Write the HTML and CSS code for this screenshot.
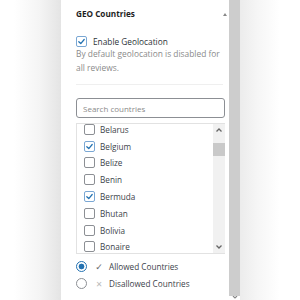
FILE: index.html
```html
<!DOCTYPE html>
<html>
<head>
<meta charset="utf-8">
<link rel="stylesheet" href="styles.css">
</head>
<body>
<div class="screen">
  <div class="left-shade"></div>
  <div class="panel">
    <div class="panel-head">
      <span class="title">GEO Countries</span>
      <span class="toggle"></span>
    </div>
    <label class="check-row">
      <span class="cb checked"><svg viewBox="0 0 10 10"><path d="M2 5.2 L4.2 7.3 L8 2.8" /></svg></span>
      <span class="check-label">Enable Geolocation</span>
    </label>
    <p class="desc">By default geolocation is disabled for all reviews.</p>
    <div class="sep"></div>
    <div class="search">Search countries</div>
    <div class="listbox">
      <div class="items">
        <div class="item"><span class="cb"></span>Belarus</div>
        <div class="item"><span class="cb checked"><svg viewBox="0 0 10 10"><path d="M2 5.2 L4.2 7.3 L8 2.8" /></svg></span>Belgium</div>
        <div class="item"><span class="cb"></span>Belize</div>
        <div class="item"><span class="cb"></span>Benin</div>
        <div class="item"><span class="cb checked"><svg viewBox="0 0 10 10"><path d="M2 5.2 L4.2 7.3 L8 2.8" /></svg></span>Bermuda</div>
        <div class="item"><span class="cb"></span>Bhutan</div>
        <div class="item"><span class="cb"></span>Bolivia</div>
        <div class="item"><span class="cb"></span>Bonaire</div>
      </div>
      <div class="vscroll">
        <span class="arrow"><svg viewBox="0 0 8 8"><path d="M1.5 5.5 L4 3 L6.5 5.5" /></svg></span>
        <span class="track"><span class="thumb"></span></span>
        <span class="arrow"><svg viewBox="0 0 8 8"><path d="M1.5 2.5 L4 5 L6.5 2.5" /></svg></span>
      </div>
    </div>
    <div class="radios">
      <div class="radio-row">
        <span class="radio on"></span>
        <span class="mark tick">✓</span>
        <span>Allowed Countries</span>
      </div>
      <div class="radio-row">
        <span class="radio"></span>
        <span class="mark cross">✕</span>
        <span>Disallowed Countries</span>
      </div>
    </div>
  </div>
  <div class="outer-scroll">
    <span class="outer-track"></span>
    <span class="outer-arrow"><svg viewBox="0 0 8 8"><path d="M2 3 L4 5 L6 3" /></svg></span>
  </div>
  <div class="right-shade"></div>
</div>
</body>
</html>
```
FILE: styles.css
```css
* { box-sizing: border-box; }
html, body { margin: 0; padding: 0; }
body {
  font-family: "Open Sans", "DejaVu Sans", sans-serif;
  color: #2c3338;
  background: #fff;
}
.screen {
  display: flex;
  width: 300px;
  height: 300px;
  overflow: hidden;
}
.left-shade {
  width: 61px;
  flex: none;
  background: linear-gradient(to right, #ffffff 0px, #ffffff 14px, #f4f4f4 40px, #e4e4e4 61px);
}
.panel {
  width: 168px;
  flex: none;
  height: 296px;
  background: #fff;
  padding: 0 4px 0 15px;
  display: flex;
  flex-direction: column;
}
.panel-head {
  height: 27px;
  display: flex;
  align-items: center;
  justify-content: space-between;
}
.title {
  font-weight: 700;
  font-size: 8.2px;
  color: #1e1e1e;
}
.toggle {
  width: 0;
  height: 0;
  border-left: 2.5px solid transparent;
  border-right: 2.5px solid transparent;
  border-bottom: 3.5px solid #888;
  margin-right: -2px;
  margin-top: 1px;
}
.check-row {
  display: flex;
  align-items: center;
  gap: 6px;
  height: 14px;
  margin-top: 7px;
  color: #2c3338;
}
.check-label { font-size: 8.3px; }
.cb {
  width: 11px;
  height: 11px;
  flex: none;
  border: 1px solid #8c8f94;
  border-radius: 2px;
  background: #fff;
  display: inline-flex;
  align-items: center;
  justify-content: center;
}
.cb.checked { border-color: #7aa7d4; }
.cb svg { width: 9px; height: 9px; }
.cb svg path { fill: none; stroke: #2271b1; stroke-width: 1.4; stroke-linecap: round; stroke-linejoin: round; }
.desc {
  margin: -1px 0 0;
  font-size: 8.4px;
  line-height: 13.5px;
  color: #8a8a8a;
  padding-right: 2px;
}
.sep {
  height: 1px;
  background: #efefef;
  margin-top: 10px;
  margin-right: 2px;
}
.search {
  margin-top: 13px;
  height: 20px;
  border: 1px solid #8c8f94;
  border-radius: 3px;
  font-size: 8px;
  color: #8a8a8a;
  display: flex;
  align-items: center;
  padding-left: 6px;
}
.listbox {
  margin-top: 5px;
  height: 131px;
  border: 1px solid #e2e2e2;
  border-right: none;
  display: flex;
  overflow: hidden;
}
.items {
  flex: 1;
  overflow: hidden;
  padding-left: 7px;
}
.items .item:first-child { margin-top: -3px; }
.item {
  height: 16.8px;
  display: flex;
  align-items: center;
  gap: 5px;
  font-size: 8.2px;
  color: #3c434a;
}
.vscroll {
  width: 12px;
  flex: none;
  background: #f1f1f1;
  display: flex;
  flex-direction: column;
}
.arrow {
  height: 12px;
  display: flex;
  align-items: center;
  justify-content: center;
}
.arrow svg { width: 8px; height: 8px; }
.arrow svg path { fill: none; stroke: #666; stroke-width: 1.3; }
.track { flex: 1; padding-top: 7px; }
.thumb {
  display: block;
  height: 13px;
  background: #c9c9c9;
}
.radios {
  margin-top: 4px;
  display: flex;
  flex-direction: column;
}
.radio-row {
  display: flex;
  align-items: center;
  font-size: 8.2px;
  height: 17px;
  color: #3c434a;
}
.radio {
  width: 11px;
  height: 11px;
  flex: none;
  border-radius: 50%;
  border: 1px solid #8c8f94;
  background: #fff;
}
.radio.on {
  border-color: #2271b1;
  background: radial-gradient(circle, #2271b1 0 2.6px, #fff 3.2px);
}
.mark {
  width: 10px;
  margin-left: 7px;
  margin-right: 5px;
  text-align: center;
  font-size: 9px;
}
.tick { color: #666; }
.cross { color: #bbb; font-size: 8px; }
.outer-scroll {
  width: 11px;
  flex: none;
  display: flex;
  flex-direction: column;
  height: 300px;
}
.outer-track {
  height: 296px;
  background: #cdcdcd;
  display: block;
}
.outer-arrow {
  height: 4px;
  display: flex;
  justify-content: center;
  overflow: hidden;
}
.outer-arrow svg { width: 8px; height: 8px; margin-top: -3px; }
.outer-arrow svg path { fill: none; stroke: #888; stroke-width: 1.2; }
.right-shade {
  flex: 1;
  background: linear-gradient(to right, #ececec 0px, #f6f6f6 18px, #ffffff 40px);
}
```
